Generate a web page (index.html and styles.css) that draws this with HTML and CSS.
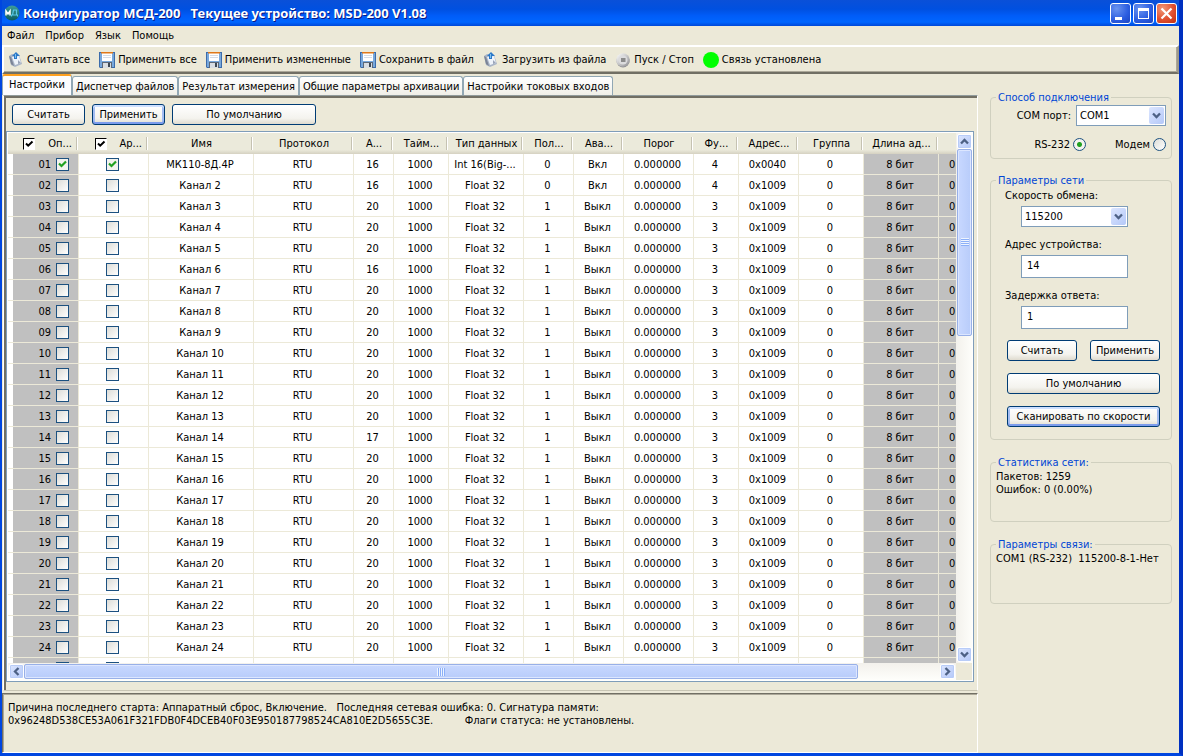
FILE: index.html
```
<!DOCTYPE html>
<html lang="ru">
<head>
	<meta charset="utf-8">
	<title>Конфигуратор МСД-200</title>
	<link rel="stylesheet" href="styles.css">
</head>
<body>
	<header class="titlebar">
		<svg class="app-icon" viewBox="0 0 16 16">
			<defs>
				<linearGradient id="ball" x1="0" y1="0" x2="0" y2="1">
					<stop offset="0" stop-color="#3f9d98"/>
					<stop offset="1" stop-color="#0a5a5c"/>
				</linearGradient>
			</defs>
			<circle cx="8" cy="8" r="7.5" fill="url(#ball)"/>
			<path d="M2 10.5V6l2 3 2-3v4.5" fill="none" stroke="#fff" stroke-width="1.5"/>
			<path d="M7.500 11.500V10h6v1.500M8.500 10l1-5h3v5" fill="none" stroke="#58c8e8" stroke-width="1.2"/>
		</svg>
		<h1>Конфигуратор МСД-200 &nbsp; Текущее устройство: MSD-200 V1.08</h1>
		<button class="caption" aria-label="Свернуть"><svg viewBox="0 0 21 21"><path d="M5 14h7v3H5z" fill="#fff"/></svg></button>
		<button class="caption" aria-label="Развернуть"><svg viewBox="0 0 21 21"><path d="M5 5h11v11H5zM6 8v7h9V8z" fill="#fff" fill-rule="evenodd"/></svg></button>
		<button class="caption close" aria-label="Закрыть"><svg viewBox="0 0 21 21"><path d="M5.500 5.500l10 10M15.500 5.500l-10 10" stroke="#fff" stroke-width="2.2"/></svg></button>
	</header>

	<nav class="menu">
		<button>Файл</button>
		<button>Прибор</button>
		<button>Язык</button>
		<button>Помощь</button>
	</nav>

	<svg class="symbols">
		<defs>
			<linearGradient id="metal" x1="0" y1="0" x2="1" y2="1">
				<stop offset="0" stop-color="#fff"/>
				<stop offset="1" stop-color="#8c8c90"/>
			</linearGradient>
		</defs>
		<symbol id="i-read" viewBox="0 0 16 16">
			<path d="M1 4l3-2 7 1 3 9-7 3-4-2z" fill="#a9b4c6"/>
			<path d="M1 4l2 1 3 9-3-2z" fill="#7c8496"/>
			<path d="M4 5l7-1 2 7-6 2z" fill="#eef3fa"/>
			<path d="M10 8l3 3-3 1z" fill="#9aa4b8"/>
			<path d="M6 7V4H4l4-4 4 4H9v3z" fill="#2b78c8"/>
			<path d="M7 2h1v4H7z" fill="#7dc0f0"/>
		</symbol>
		<symbol id="i-save" viewBox="0 0 16 16">
			<path d="M0 0h16v16H1l-1-1z" fill="#3c6cab"/>
			<path d="M1 1h14v14H1z" fill="#78a8dc"/>
			<path d="M3 1h10v8H3z" fill="#fff"/>
			<path d="M2 0h12v1.500H2z" fill="#e07818"/>
			<path d="M4 3h8v1H4zM4 5h8v1H4z" fill="#d4dce6"/>
			<path d="M3 10h10v6H3z" fill="#5d6877"/>
			<path d="M4 11h8v5H4z" fill="#d8dde2"/>
			<path d="M9 11h2v4H9z" fill="#3d4854"/>
		</symbol>
		<symbol id="i-stop" viewBox="0 0 16 16">
			<circle cx="8" cy="9" r="6.5" fill="#8c8c90"/>
			<circle cx="8" cy="8" r="6.8" fill="url(#metal)"/>
			<circle cx="8" cy="8" r="4.5" fill="#dcdcde"/>
			<path d="M6 6h4.500v4H6z" fill="#8b8b8b"/>
		</symbol>
		<symbol id="i-down" viewBox="0 0 9 9">
			<path d="M1 2.500l3.500 3.500L8 2.500" fill="none" stroke="#4d6185" stroke-width="2.3"/>
		</symbol>
	</svg>

	<div class="toolbar">
		<button class="tool"><svg><use href="#i-read"/></svg>Считать все</button>
		<button class="tool"><svg><use href="#i-save"/></svg>Применить все</button>
		<button class="tool"><svg><use href="#i-save"/></svg>Применить измененные</button>
		<button class="tool"><svg><use href="#i-save"/></svg>Сохранить в файл</button>
		<button class="tool"><svg><use href="#i-read"/></svg>Загрузить из файла</button>
		<button class="tool"><svg><use href="#i-stop"/></svg>Пуск / Стоп</button>
		<span class="tool"><i class="lamp"></i>Связь установлена</span>
	</div>

	<main>
		<section class="left">
			<div class="tabs" role="tablist">
				<button class="tab active" role="tab">Настройки</button>
				<button class="tab" role="tab">Диспетчер файлов</button>
				<button class="tab" role="tab">Результат измерения</button>
				<button class="tab" role="tab">Общие параметры архивации</button>
				<button class="tab" role="tab">Настройки токовых входов</button>
			</div>
			<div class="page">
				<div class="actions">
					<button class="btn">Считать</button>
					<button class="btn default">Применить</button>
					<button class="btn wide">По умолчанию</button>
				</div>
				<div class="list">
					<div class="view">
						<table>
							<colgroup>
								<col class="w-pad"><col class="w-poll"><col class="w-arch"><col class="w-name"><col class="w-proto">
								<col class="w-addr"><col class="w-time"><col class="w-type"><col class="w-fifty"><col class="w-fifty">
								<col class="w-limit"><col class="w-func"><col class="w-reg"><col class="w-group"><col class="w-len"><col class="w-last">
							</colgroup>
							<thead>
								<tr>
									<th class="pad"></th>
									<th><label><input type="checkbox" class="classic" checked>Оп...</label></th>
									<th><label><input type="checkbox" class="classic" checked>Ар...</label></th>
									<th>Имя</th>
									<th>Протокол</th>
									<th>А...</th>
									<th>Тайм...</th>
									<th>Тип данных</th>
									<th>Пол...</th>
									<th>Ава...</th>
									<th>Порог</th>
									<th>Фу...</th>
									<th>Адрес...</th>
									<th>Группа</th>
									<th>Длина ад...</th>
									<th></th>
								</tr>
							</thead>
							<tbody id="channels"></tbody>
						</table>
					</div>
					<div class="scroll vertical">
						<button aria-label="Вверх"><svg class="up"><use href="#i-down"/></svg></button>
						<div class="track"><div class="thumb"></div></div>
						<button aria-label="Вниз"><svg><use href="#i-down"/></svg></button>
					</div>
					<div class="scroll horizontal">
						<button aria-label="Влево"><svg class="back"><use href="#i-down"/></svg></button>
						<div class="track"><div class="thumb"></div></div>
						<button aria-label="Вправо"><svg class="forward"><use href="#i-down"/></svg></button>
					</div>
				</div>
			</div>
			<div class="log">Причина последнего старта: Аппаратный сброс, Включение. &nbsp; Последняя сетевая ошибка: 0. Сигнатура памяти:<br>0x96248D538CE53A061F321FDB0F4DCEB40F03E950187798524CA810E2D5655C3E. &nbsp; &nbsp; &nbsp; &nbsp; &nbsp;Флаги статуса: не установлены.</div>
		</section>

		<aside>
			<fieldset class="connection">
				<legend>Способ подключения</legend>
				<div class="port">
					<label for="port">COM порт:</label>
					<span class="combo"><select id="port"><option>COM1</option></select><i><svg><use href="#i-down"/></svg></i></span>
				</div>
				<div class="modes">
					<label>RS-232<input type="radio" name="mode" checked></label>
					<label>Модем<input type="radio" name="mode"></label>
				</div>
			</fieldset>

			<fieldset class="network">
				<legend>Параметры сети</legend>
				<div class="fields">
					<label for="speed">Скорость обмена:</label>
					<span class="combo"><select id="speed"><option>115200</option></select><i><svg><use href="#i-down"/></svg></i></span>
					<label for="address">Адрес устройства:</label>
					<input type="text" id="address" value="14">
					<label for="delay">Задержка ответа:</label>
					<input type="text" id="delay" value="1">
					<div class="buttons">
						<button class="btn">Считать</button>
						<button class="btn">Применить</button>
						<button class="btn full">По умолчанию</button>
						<button class="btn full default">Сканировать по скорости</button>
					</div>
				</div>
			</fieldset>

			<fieldset class="info">
				<legend>Статистика сети:</legend>
				<p>Пакетов: 1259</p>
				<p>Ошибок: 0 (0.00%)</p>
			</fieldset>

			<fieldset class="info">
				<legend>Параметры связи:</legend>
				<p>COM1 (RS-232) &nbsp;115200-8-1-Нет</p>
			</fieldset>
		</aside>
	</main>

	<script src="channels.js"></script>
</body>
</html>
```
FILE: styles.css
```
* {
	box-sizing: border-box;
}
body {
	margin: 0;
	height: 100vh;
	display: flex;
	flex-direction: column;
	overflow: hidden;
	background: #ece9d8;
	border: solid #0046e0;
	border-width: 0 4px 3px 2px;
	border-right-color: #0030c0;
	font: 11px/13px Tahoma, "DejaVu Sans Condensed", "Noto Sans", sans-serif;
	color: #000;
}
button, input, select {
	font: inherit;
	color: inherit;
	margin: 0;
	padding: 0;
}
button {
	border: 0;
	background: none;
	white-space: nowrap;
}
svg {
	display: block;
}
.symbols {
	position: absolute;
	width: 0;
	height: 0;
}

.titlebar {
	flex: none;
	height: 26px;
	margin: 0 -4px 0 -2px;
	padding: 0 6px 0 4px;
	display: flex;
	align-items: center;
	gap: 2px;
	background: linear-gradient(#0a50d8, #0050e0 35%, #005cf8 60%, #0066ff 85%, #0048d8);
}
.app-icon {
	width: 16px;
	height: 16px;
}
.titlebar h1 {
	flex: 1;
	margin: 0 0 0 1px;
	font: bold 13px/20px "Trebuchet MS", "Noto Sans", sans-serif;
	color: #fff;
	text-shadow: 1px 1px #0a1883;
	white-space: nowrap;
}
.caption {
	width: 21px;
	height: 21px;
	border: 1px solid #fff;
	border-radius: 3px;
	background: radial-gradient(circle at 30% 25%, #6a94f0, #2a5ce0 60%, #1c44c0);
}
.caption svg {
	width: 21px;
	height: 21px;
	margin: -1px;
}
.close {
	background: radial-gradient(circle at 30% 25%, #f09878, #e05030 55%, #c03010);
}

.menu {
	flex: none;
	height: 19px;
	padding: 0 5px;
	display: flex;
	gap: 11px;
}
.toolbar {
	flex: none;
	height: 29px;
	padding: 0 4px;
	display: flex;
	align-items: center;
	gap: 9px;
	border: 2px solid;
	border-color: #fff #9c998c #716f64 #fff;
	box-shadow: inset -1px -1px #aca899;
}
.tool {
	display: flex;
	align-items: center;
	gap: 3px;
}
.tool svg {
	width: 16px;
	height: 16px;
}
.lamp {
	width: 16px;
	height: 16px;
	border-radius: 50%;
	background: #00ff00;
}

main {
	flex: 1;
	min-height: 0;
	display: flex;
}
.left {
	flex: 1;
	min-width: 0;
	display: flex;
	flex-direction: column;
}

.tabs {
	flex: none;
	height: 21px;
	display: flex;
	align-items: flex-end;
}
.tab {
	height: 19px;
	padding: 0 3px;
	border: 1px solid #91a7b4;
	border-bottom: 0;
	border-radius: 3px 3px 0 0;
	background: linear-gradient(#fff, #f0efe8);
}
.tab.active {
	height: 21px;
	padding: 0 6px 2px;
	border-top: 2px solid #ffa020;
	background: #fcfcfe;
}

.page {
	flex: 1;
	min-height: 0;
	margin: 0 0 0 1px;
	padding: 8px 3px 8px 2px;
	display: flex;
	flex-direction: column;
	gap: 6px;
	border: 1px solid #91a7b4;
	border-color: #919b9c #fff #c8c5b4 #fff;
	box-shadow: inset 2px 2px #716f64;
}
.actions {
	display: flex;
	gap: 7px;
	padding-left: 6px;
}
.btn {
	height: 21px;
	min-width: 73px;
	border: 1px solid #003c74;
	border-radius: 3px;
	background: linear-gradient(#fff, #f4f3ee 70%, #dfdbcf);
}
.btn.default {
	box-shadow: inset 0 2px #cee0ff, inset 0 -2px #7c9cec, inset 0 0 0 2px #a4bdf2;
}
.btn.wide {
	width: 144px;
}

.list {
	flex: 1;
	min-height: 0;
	display: grid;
	grid-template:
		"view vertical" 1fr
		"horizontal corner" 17px /
		1fr 17px
	;
	padding: 1px 0 1px 1px;
	border: 1px solid #7f9db9;
	background: #ece9d8;
	outline: 1px solid #fff;
	outline-offset: -2px;
}
.view {
	grid-area: view;
	overflow: hidden;
	background: #fff;
}
table {
	table-layout: fixed;
	width: 1000px;
	border-collapse: separate;
	border-spacing: 0;
}
.w-pad { width: 5px; }
.w-poll { width: 66px; }
.w-arch { width: 70px; }
.w-name { width: 105px; }
.w-proto { width: 100px; }
.w-addr { width: 40px; }
.w-time { width: 55px; }
.w-type { width: 75px; }
.w-fifty { width: 50px; }
.w-limit { width: 70px; }
.w-func { width: 45px; }
.w-reg { width: 60px; }
.w-group { width: 65px; }
.w-len { width: 75px; }
th, td {
	height: 21px;
	padding: 0 2px 0 0;
	overflow: hidden;
	white-space: nowrap;
	text-align: center;
}
th {
	padding: 0;
	font-weight: normal;
	background:
		linear-gradient(#c5c2b2, #c5c2b2) right 2px top 4px / 1px 13px no-repeat,
		linear-gradient(#fff, #fff) right 1px top 4px / 1px 13px no-repeat,
		linear-gradient(#ebeadb 80%, #d5d1c1);
}
th.pad {
	background: linear-gradient(#ebeadb 80%, #d5d1c1);
}
th label {
	display: flex;
	align-items: center;
	justify-content: flex-end;
	gap: 13px;
	padding-right: 7px;
}
td {
	border: solid #ece9d8;
	border-width: 0 1px 1px 0;
}
td:first-child {
	border-right: 0;
}
td.off {
	background: #c0c0c0;
}
td.num label {
	display: flex;
	align-items: center;
	justify-content: flex-end;
	gap: 5px;
	padding-right: 7px;
}
td.last {
	padding-left: 10px;
	text-align: left;
}

input[type=checkbox] {
	appearance: none;
	flex: none;
	display: inline-block;
	vertical-align: middle;
	width: 13px;
	height: 13px;
	border: 1px solid #1c5180;
	background: linear-gradient(135deg, #dcdcd7, #fff);
}
input[type=checkbox]:checked {
	background: #f3f3ef url("data:image/svg+xml,%3Csvg xmlns='http://www.w3.org/2000/svg' viewBox='0 0 11 11'%3E%3Cpath d='M2 4.500l2.500 2.500L9 2.500' fill='none' stroke='%2321a121' stroke-width='2.2'/%3E%3C/svg%3E") center / 11px 11px no-repeat;
}
input[type=checkbox].classic {
	width: 12px;
	height: 12px;
	border: 1px solid;
	border-color: #000 #fff #fff #000;
}
input[type=checkbox].classic:checked {
	background: #fff url("data:image/svg+xml,%3Csvg xmlns='http://www.w3.org/2000/svg' viewBox='0 0 10 10'%3E%3Cpath d='M2 4.500l2.200 2.200L8.500 2.500' fill='none' stroke='%23000' stroke-width='2'/%3E%3C/svg%3E") center / 10px 10px no-repeat;
}

.scroll {
	display: flex;
	padding: 1px;
}
.vertical {
	grid-area: vertical;
	flex-direction: column;
	background: linear-gradient(90deg, #f3f1ec, #fefefb);
}
.horizontal {
	grid-area: horizontal;
	background: linear-gradient(#f3f1ec, #fefefb);
}
.scroll button {
	flex: none;
	width: 15px;
	height: 15px;
	display: grid;
	place-items: center;
	border: 1px solid #fff;
	border-radius: 2px;
	background: linear-gradient(135deg, #dce6ff, #b4c8f8);
	box-shadow: inset 0 0 0 1px #b8ccf8;
}
.scroll svg, .combo svg {
	width: 9px;
	height: 9px;
}
.up { transform: rotate(180deg); }
.back { transform: rotate(90deg); }
.forward { transform: rotate(-90deg); }
.track {
	flex: 1;
	min-height: 0;
}
.thumb {
	display: grid;
	place-items: center;
	border: 1px solid #98b0e8;
	border-radius: 2px;
	box-shadow: inset 0 0 0 1px #dce6ff;
}
.vertical .thumb {
	height: 37.5%;
	background: linear-gradient(90deg, #c8d8ff, #b8ccfa);
}
.horizontal .thumb {
	width: 91%;
	height: 15px;
	background: linear-gradient(#c8d8ff, #b8ccfa);
}
.thumb::after {
	content: "";
	width: 8px;
	height: 8px;
	background: repeating-linear-gradient(#eef4fe 0 1px, #8cb0f8 1px 2px);
}
.horizontal .thumb::after {
	background: repeating-linear-gradient(90deg, #eef4fe 0 1px, #8cb0f8 1px 2px);
}

.log {
	flex: none;
	height: 60px;
	margin-top: 2px;
	padding: 7px 5px;
	border: 1px solid;
	border-color: #716f64 #fff #fff #716f64;
	box-shadow: inset 1px 1px #aca899;
	white-space: nowrap;
	overflow: hidden;
}

aside {
	flex: none;
	width: 201px;
	padding: 17px 7px 0 12px;
}
fieldset {
	min-width: 0;
	margin: 0;
	padding: 1px 5px 0;
	border: 1px solid #d0d0bf;
	border-radius: 4px;
}
legend {
	padding: 0 2px;
	color: #0046d5;
}
.connection {
	height: 68px;
}
.port {
	display: flex;
	align-items: center;
	justify-content: flex-end;
	gap: 5px;
}
.combo {
	position: relative;
	display: block;
}
.combo select {
	appearance: none;
	display: block;
	width: 90px;
	height: 21px;
	padding: 0 3px;
	border: 1px solid #7f9db9;
	border-radius: 0;
	background: #fff;
}
.combo i {
	position: absolute;
	top: 2px;
	right: 2px;
	width: 15px;
	height: 17px;
	display: grid;
	place-items: center;
	border-radius: 2px;
	background: linear-gradient(135deg, #dce6ff, #b4c8f8);
	pointer-events: none;
}
.modes {
	display: flex;
	justify-content: flex-end;
	gap: 29px;
	margin-top: 12px;
}
.modes label {
	display: flex;
	align-items: center;
	gap: 3px;
}
input[type=radio] {
	appearance: none;
	width: 13px;
	height: 13px;
	border: 1px solid #1c5180;
	border-radius: 50%;
	background: linear-gradient(135deg, #dcdcd7, #fff);
}
input[type=radio]:checked {
	background: radial-gradient(circle, #21a121 0 2px, #f3f3ef 3px);
}

.network {
	height: 266px;
	margin-top: 15px;
}
.fields {
	padding: 1px 6px 0 9px;
}
.fields label {
	display: block;
}
.fields .combo {
	width: 107px;
	margin: 4px 0 11px 16px;
}
.fields select {
	width: 107px;
}
.fields input {
	display: block;
	width: 107px;
	height: 23px;
	margin: 4px 0 11px 16px;
	padding: 0 5px 3px;
	border: 1px solid #7f9db9;
	background: #fff;
}
.buttons {
	display: grid;
	grid-template-columns: 70px 70px;
	justify-content: space-between;
	gap: 12px 0;
	padding-left: 2px;
}
.buttons .btn {
	min-width: 0;
}
.full {
	grid-column: 1 / -1;
}

.info {
	height: 66px;
	margin-top: 16px;
}
.info p {
	margin: 0;
}
```
FILE: channels.js
```
const channels = document.querySelector("#channels")

// device address is 20 except on these channels
const addresses = { 1: 16, 2: 16, 6: 16, 14: 17 }

for (let n = 1; n <= 25; n++) {
	const first = n === 1
	const on = n <= 2
	const checked = first ? " checked" : ""
	const number = String(n).padStart(2, "0")
	const cells = [
		first ? "МК110-8Д.4Р" : `Канал ${n}`,
		"RTU",
		addresses[n] || 20,
		1000,
		first ? "Int 16(Big-..." : "Float 32",
		on ? 0 : 1,
		on ? "Вкл" : "Выкл",
		"0.000000",
		on ? 4 : 3,
		first ? "0x0040" : "0x1009",
		0,
	]
	const row = document.createElement("tr")
	row.innerHTML = `<td></td>
		<td class="off num"><label>${number}<input type="checkbox"${checked}></label></td>
		<td><input type="checkbox" aria-label="Архивировать ${number}"${checked}></td>
		${cells.map(text => `<td>${text}</td>`).join("")}
		<td class="off">8 бит</td>
		<td class="off last">0</td>`
	channels.append(row)
}
```
